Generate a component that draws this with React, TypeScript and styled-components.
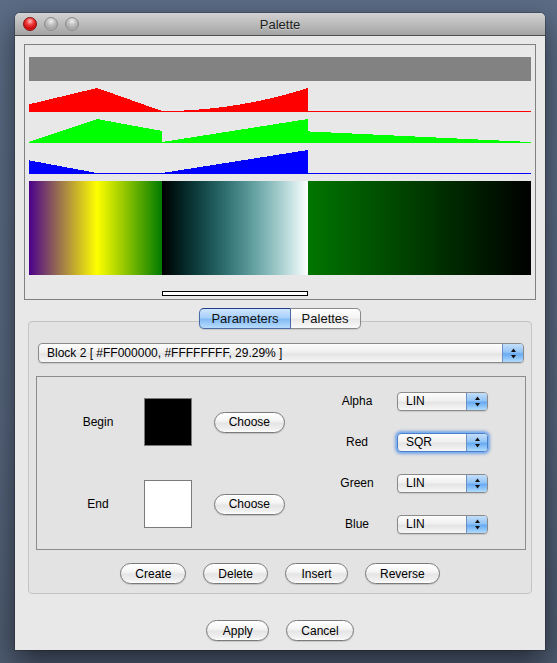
import React, { useMemo } from "react";
import styled, { createGlobalStyle, css } from "styled-components";

const CHART_W = 502;
const CHART_H = 24;

type Channel = "a" | "r" | "g" | "b";
type Rgba = Record<Channel, number>;

const lerp = (a: number, b: number, t: number) => a + (b - a) * t;

// colour of the palette at column u (0..501), one block after another
const sample = (u: number): Rgba => {
  if (u < 68) {
    const t = u / 68;
    return { a: 1, r: lerp(0.29, 1, t), g: lerp(0, 1, t), b: lerp(0.55, 0, t) };
  }
  if (u < 133) {
    const t = (u - 68) / 65;
    return { a: 1, r: lerp(1, 0, t), g: lerp(1, 0.48, t), b: 0 };
  }
  if (u < 279) {
    const t = (u - 133) / 146;
    return { a: 1, r: t * t, g: t, b: t };
  }
  const t = (u - 279) / 223;
  return { a: 1, r: 0, g: lerp(0.46, 0, t), b: 0 };
};

const chartPath = (ch: Channel) => {
  let d = `M0 ${CHART_H}`;
  for (let i = 0; i < CHART_W; i++) {
    const h = Math.round(sample(i + 0.5)[ch] * (CHART_H - 1)) + 1;
    const y = CHART_H - h;
    d += ` L${i} ${y} L${i + 1} ${y}`;
  }
  return d + ` L${CHART_W} ${CHART_H} Z`;
};

const bandGradient = () => {
  const stops: number[] = [];
  for (let u = 0; u <= CHART_W; u += 2) stops.push(u);
  stops.push(68, 132.99, 133, 278.99, 279);
  stops.sort((a, b) => a - b);
  const parts = stops.map((u) => {
    const c = sample(Math.min(u, CHART_W - 0.01));
    const v = (n: number) => Math.round(n * 255);
    return `rgb(${v(c.r)},${v(c.g)},${v(c.b)}) ${u}px`;
  });
  return `linear-gradient(to right, ${parts.join(", ")})`;
};

const GlobalStyle = createGlobalStyle`
  html, body {
    margin: 0;
    padding: 0;
  }
  body {
    background: #55647b;
    font-family: "Liberation Sans", Arial, sans-serif;
  }
`;

const Desktop = styled.div`
  width: 557px;
  height: 663px;
  box-sizing: border-box;
  padding: 13px 0 0 15px;
  overflow: hidden;
  background: linear-gradient(180deg, #5c6c85 0%, #56657d 60%, #4d5a70 100%);
`;

const Window = styled.div`
  width: 530px;
  height: 637px;
  display: flex;
  flex-direction: column;
  background: #e8e8e8;
  border-radius: 5px 5px 0 0;
  box-shadow: 0 12px 30px rgba(0, 0, 0, 0.55), 0 0 0 1px rgba(0, 0, 0, 0.2);
`;

const TitleBar = styled.div`
  height: 22px;
  display: grid;
  grid-template-columns: 1fr auto 1fr;
  align-items: center;
  background: linear-gradient(#d2d2d2, #a4a4a4);
  border-bottom: 1px solid #505050;
  border-radius: 5px 5px 0 0;
`;

const Lights = styled.div`
  display: flex;
  gap: 7px;
  padding-left: 8px;
`;

const Light = styled.span<{ $close?: boolean }>`
  width: 14px;
  height: 14px;
  box-sizing: border-box;
  border-radius: 50%;
  ${(p) =>
    p.$close
      ? css`
          border: 1px solid #8a1010;
          background: radial-gradient(circle at 50% 28%, #ffc4c4 0%, #f03a3a 35%, #c80a0a 70%, #ff5a5a 100%);
        `
      : css`
          border: 1px solid #8c8c8c;
          background: radial-gradient(circle at 50% 28%, #f0f0f0 0%, #bdbdbd 40%, #a6a6a6 70%, #cfcfcf 100%);
        `}
`;

const Title = styled.span`
  font-size: 13px;
  color: #1c1c1c;
  text-shadow: 0 1px 0 rgba(255, 255, 255, 0.35);
`;

const Body = styled.div`
  padding: 8px 9px 9px;
  display: flex;
  flex-direction: column;
`;

const GraphPanel = styled.div`
  border: 1px solid #808080;
  padding: 12px 4px 3px;
  display: flex;
  flex-direction: column;
  gap: 7px;
`;

const ChartSvg = styled.svg`
  display: block;
  shape-rendering: crispEdges;
`;

const Band = styled.div`
  width: ${CHART_W}px;
  height: 94px;
`;

const Selector = styled.div<{ $from: number; $width: number }>`
  margin-top: 9px;
  margin-left: ${(p) => p.$from}px;
  width: ${(p) => p.$width}px;
  height: 5px;
  box-sizing: border-box;
  border: 1px solid #000;
  background: #fff;
`;

const TabStrip = styled.div`
  margin-top: 8px;
  margin-bottom: -8px;
  display: flex;
  justify-content: center;
  position: relative;
  z-index: 1;
`;

const Tab = styled.div<{ $active?: boolean; $first?: boolean; $last?: boolean }>`
  height: 21px;
  box-sizing: border-box;
  padding: 0 11px;
  display: flex;
  align-items: center;
  font-size: 13px;
  color: #111;
  border: 1px solid #8a8a8a;
  border-radius: ${(p) => (p.$first ? "5px 0 0 5px" : p.$last ? "0 5px 5px 0" : "0")};
  ${(p) => (p.$first ? "" : "border-left: none;")}
  background: linear-gradient(#ffffff 0%, #f4f4f4 45%, #e8e8e8 55%, #fafafa 100%);
  box-shadow: 0 1px 1px rgba(0, 0, 0, 0.12);
  ${(p) =>
    p.$active &&
    css`
      border-color: #4b6ba8;
      border-top-color: #1f3a86;
      background: linear-gradient(#d0e6fd 0%, #a8d0fa 45%, #84bcf6 55%, #b8dcfc 100%);
    `}
`;

const TabBox = styled.div`
  margin: 0 4px;
  height: 273px;
  box-sizing: border-box;
  border: 1px solid #c4c4c4;
  border-radius: 4px;
  background: #e3e3e3;
  padding: 21px 0 9px;
  display: flex;
  flex-direction: column;
  align-items: flex-start;
`;

const Popup = styled.div<{ $width: number; $height: number; $focused?: boolean }>`
  width: ${(p) => p.$width}px;
  height: ${(p) => p.$height}px;
  box-sizing: border-box;
  display: flex;
  border: 1px solid #8a8a8a;
  border-radius: 4px;
  overflow: hidden;
  background: linear-gradient(#fdfdfd 0%, #f0f0f0 45%, #e4e4e4 55%, #f7f7f7 100%);
  box-shadow: 0 1px 1px rgba(0, 0, 0, 0.12);
  ${(p) =>
    p.$focused &&
    css`
      border-color: #4d7fc9;
      box-shadow: 0 0 0 1px #7fb0f0, 0 0 3px 2px rgba(80, 140, 225, 0.75);
    `}
`;

const PopupText = styled.span`
  flex: 1;
  display: flex;
  align-items: center;
  padding-left: 8px;
  font-size: 12px;
  color: #000;
  white-space: nowrap;
`;

const Stepper = styled.span`
  width: 20px;
  display: flex;
  align-items: center;
  justify-content: center;
  border-left: 1px solid #6b8fc6;
  background: linear-gradient(#c4def9 0%, #92c4f6 45%, #68aaf2 55%, #b0dcfc 100%);
`;

const ComboBox = styled(Popup)`
  margin-left: 9px;
`;

const ParamBox = styled.div`
  margin: 13px 0 0 7px;
  width: 490px;
  height: 174px;
  box-sizing: border-box;
  border: 1px solid #8c8c8c;
  display: flex;
  align-items: flex-start;
`;

const ColorGrid = styled.div`
  margin: 21px 0 0 31px;
  display: grid;
  grid-template-columns: 60px 48px 77px;
  grid-auto-rows: 48px;
  column-gap: 16px;
  row-gap: 34px;
  align-items: center;
`;

const Label = styled.span`
  font-size: 12px;
  color: #000;
  justify-self: center;
`;

const Swatch = styled.div<{ $color: string }>`
  width: 48px;
  height: 48px;
  box-sizing: border-box;
  border: 1px solid #7a7a7a;
  background: ${(p) => p.$color};
`;

const InterpGrid = styled.div`
  margin: 14px 0 0 42px;
  display: grid;
  grid-template-columns: 60px 91px;
  grid-auto-rows: 20px;
  column-gap: 10px;
  row-gap: 21px;
  align-items: center;
`;

const PushButton = styled.button`
  height: 21px;
  min-width: 63px;
  box-sizing: border-box;
  padding: 0 14px;
  display: inline-flex;
  align-items: center;
  justify-content: center;
  font-family: "Liberation Sans", Arial, sans-serif;
  font-size: 12px;
  color: #000;
  border: 1px solid #7a7a7a;
  border-radius: 11px;
  background: linear-gradient(#ffffff 0%, #f5f5f5 40%, #e5e5e5 55%, #f0f0f0 85%, #ffffff 100%);
  box-shadow: 0 1px 1px rgba(0, 0, 0, 0.15);
  justify-self: end;
`;

const ButtonRow = styled.div<{ $top: number }>`
  margin-top: ${(p) => p.$top}px;
  align-self: stretch;
  display: flex;
  justify-content: center;
  gap: 17px;
`;

const Arrows = () => (
  <svg width="5" height="11" viewBox="0 0 5 11">
    <path d="M0 4 L2.5 0.5 L5 4 Z" fill="#111" />
    <path d="M0 7 L2.5 10.5 L5 7 Z" fill="#111" />
  </svg>
);

const Chart = ({ channel, color }: { channel: Channel; color: string }) => {
  const d = useMemo(() => chartPath(channel), [channel]);
  return (
    <ChartSvg width={CHART_W} height={CHART_H} viewBox={`0 0 ${CHART_W} ${CHART_H}`}>
      <path d={d} fill={color} />
    </ChartSvg>
  );
};

const channels: { key: Channel; color: string }[] = [
  { key: "a", color: "#828282" },
  { key: "r", color: "#ff0000" },
  { key: "g", color: "#00ff00" },
  { key: "b", color: "#0000ff" },
];

const interps = [
  { name: "Alpha", value: "LIN" },
  { name: "Red", value: "SQR", focused: true },
  { name: "Green", value: "LIN" },
  { name: "Blue", value: "LIN" },
];

const App = () => {
  const band = useMemo(bandGradient, []);

  return (
    <Desktop>
      <GlobalStyle />
      <Window>
        <TitleBar>
          <Lights>
            <Light $close />
            <Light />
            <Light />
          </Lights>
          <Title>Palette</Title>
        </TitleBar>
        <Body>
          <GraphPanel>
            {channels.map((c) => (
              <Chart key={c.key} channel={c.key} color={c.color} />
            ))}
            <Band style={{ background: band }} />
            <Selector $from={133} $width={146} />
          </GraphPanel>

          <TabStrip>
            <Tab $active $first>
              Parameters
            </Tab>
            <Tab $last>Palettes</Tab>
          </TabStrip>
          <TabBox>
            <ComboBox $width={486} $height={20}>
              <PopupText>Block 2 [ #FF000000, #FFFFFFFF, 29.29% ]</PopupText>
              <Stepper>
                <Arrows />
              </Stepper>
            </ComboBox>
            <ParamBox>
              <ColorGrid>
                <Label>Begin</Label>
                <Swatch $color="#000" />
                <PushButton>Choose</PushButton>
                <Label>End</Label>
                <Swatch $color="#fff" />
                <PushButton>Choose</PushButton>
              </ColorGrid>
              <InterpGrid>
                {interps.map((it) => (
                  <React.Fragment key={it.name}>
                    <Label>{it.name}</Label>
                    <Popup $width={91} $height={19} $focused={it.focused}>
                      <PopupText>{it.value}</PopupText>
                      <Stepper>
                        <Arrows />
                      </Stepper>
                    </Popup>
                  </React.Fragment>
                ))}
              </InterpGrid>
            </ParamBox>
            <ButtonRow $top={13}>
              <PushButton>Create</PushButton>
              <PushButton>Delete</PushButton>
              <PushButton>Insert</PushButton>
              <PushButton>Reverse</PushButton>
            </ButtonRow>
          </TabBox>
          <ButtonRow $top={26}>
            <PushButton>Apply</PushButton>
            <PushButton>Cancel</PushButton>
          </ButtonRow>
        </Body>
      </Window>
    </Desktop>
  );
};

export default App;
